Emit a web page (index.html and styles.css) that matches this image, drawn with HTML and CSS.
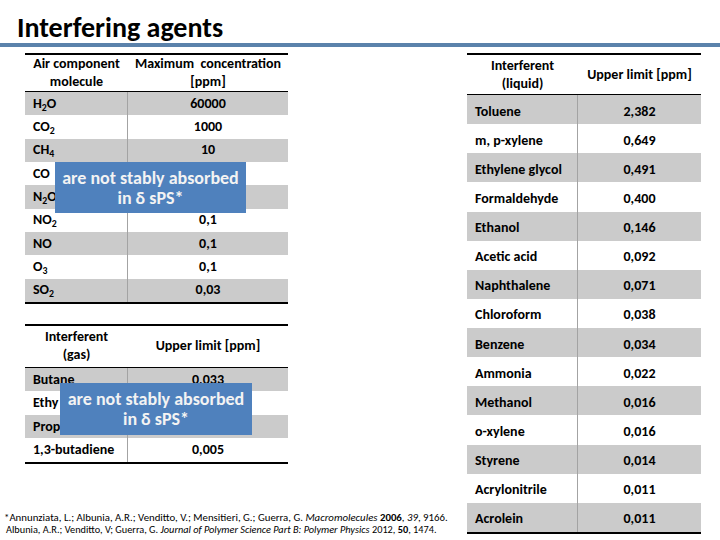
FILE: index.html
```html
<!DOCTYPE html>
<html>
<head>
<meta charset="utf-8">
<link rel="stylesheet" href="styles.css">
</head>
<body>
<header class="title-bar"><h1>Interfering agents</h1></header>
<div class="rule"></div>
<main class="content">
  <section class="left">
    <div class="tbl-wrap t1">
      <table class="data air">
        <colgroup><col class="w1"><col class="w2"></colgroup>
        <thead>
          <tr><th>Air component<br>molecule</th><th>Maximum&nbsp; concentration<br>[ppm]</th></tr>
        </thead>
        <tbody>
          <tr class="g"><td class="c1">H<sub>2</sub>O</td><td class="c2">60000</td></tr>
          <tr><td class="c1">CO<sub>2</sub></td><td class="c2">1000</td></tr>
          <tr class="g"><td class="c1">CH<sub>4</sub></td><td class="c2">10</td></tr>
          <tr><td class="c1">CO</td><td class="c2"></td></tr>
          <tr class="g"><td class="c1">N<sub>2</sub>O</td><td class="c2"></td></tr>
          <tr><td class="c1">NO<sub>2</sub></td><td class="c2">0,1</td></tr>
          <tr class="g"><td class="c1">NO</td><td class="c2">0,1</td></tr>
          <tr><td class="c1">O<sub>3</sub></td><td class="c2">0,1</td></tr>
          <tr class="g"><td class="c1">SO<sub>2</sub></td><td class="c2">0,03</td></tr>
        </tbody>
      </table>
      <div class="overlay o1">are not stably absorbed<br>in δ sPS*</div>
    </div>
    <div class="tbl-wrap t2">
      <table class="data gas">
        <colgroup><col class="w1"><col class="w2"></colgroup>
        <thead>
          <tr><th>Interferent<br>(gas)</th><th>Upper limit [ppm]</th></tr>
        </thead>
        <tbody>
          <tr class="g"><td class="c1">Butane</td><td class="c2">0,033</td></tr>
          <tr><td class="c1">Ethy</td><td class="c2"></td></tr>
          <tr class="g"><td class="c1">Prop</td><td class="c2"></td></tr>
          <tr><td class="c1">1,3-butadiene</td><td class="c2">0,005</td></tr>
        </tbody>
      </table>
      <div class="overlay o2">are not stably absorbed<br>in δ sPS*</div>
    </div>
    <p class="footnote">
      <span class="fl">*Annunziata, L.; Albunia, A.R.; Venditto, V.; Mensitieri, G.; Guerra, G. <i>Macromolecules</i> <b>2006</b>, <i>39</i>, 9166.</span>
      <span class="fl l2">Albunia, A.R.; Venditto, V; Guerra, G. <i>Journal of Polymer Science Part B: Polymer Physics</i> 2012, <b>50</b>, 1474.</span>
    </p>
  </section>
  <section class="right">
    <table class="data liquid">
      <colgroup><col class="w1"><col class="w2"></colgroup>
      <thead>
        <tr><th>Interferent<br>(liquid)</th><th>Upper limit [ppm]</th></tr>
      </thead>
      <tbody>
        <tr class="g"><td class="c1">Toluene</td><td class="c2">2,382</td></tr>
        <tr><td class="c1">m, p-xylene</td><td class="c2">0,649</td></tr>
        <tr class="g"><td class="c1">Ethylene glycol</td><td class="c2">0,491</td></tr>
        <tr><td class="c1">Formaldehyde</td><td class="c2">0,400</td></tr>
        <tr class="g"><td class="c1">Ethanol</td><td class="c2">0,146</td></tr>
        <tr><td class="c1">Acetic acid</td><td class="c2">0,092</td></tr>
        <tr class="g"><td class="c1">Naphthalene</td><td class="c2">0,071</td></tr>
        <tr><td class="c1">Chloroform</td><td class="c2">0,038</td></tr>
        <tr class="g"><td class="c1">Benzene</td><td class="c2">0,034</td></tr>
        <tr><td class="c1">Ammonia</td><td class="c2">0,022</td></tr>
        <tr class="g"><td class="c1">Methanol</td><td class="c2">0,016</td></tr>
        <tr><td class="c1">o-xylene</td><td class="c2">0,016</td></tr>
        <tr class="g"><td class="c1">Styrene</td><td class="c2">0,014</td></tr>
        <tr><td class="c1">Acrylonitrile</td><td class="c2">0,011</td></tr>
        <tr class="g"><td class="c1">Acrolein</td><td class="c2">0,011</td></tr>
      </tbody>
    </table>
  </section>
</main>
</body>
</html>
```
FILE: styles.css
```css
html, body {
  margin: 0;
  padding: 0;
}
body {
  width: 720px;
  height: 540px;
  overflow: hidden;
  background: #ffffff;
  color: #000000;
  font-family: Carlito, Lato, "Open Sans", sans-serif;
}
.title-bar {
  height: 43px;
  box-sizing: border-box;
  padding: 12px 0 0 17px;
}
.title-bar h1 {
  margin: 0;
  font-size: 28px;
  line-height: 31px;
  font-weight: 700;
}
.rule {
  height: 4px;
  background: #5b82ab;
}
.content {
  display: flex;
  padding-top: 6px;
}
.left {
  width: 263px;
  padding-left: 25px;
}
.right {
  width: 234px;
  margin-left: auto;
  margin-right: 19px;
}
.tbl-wrap {
  position: relative;
}
.t2 {
  margin-top: 20px;
}
.data {
  width: 100%;
  table-layout: fixed;
  border-collapse: separate;
  border-spacing: 0;
  border-top: 2px solid #000;
  border-bottom: 2px solid #000;
  font-size: 14px;
  font-weight: 700;
}
.data th {
  padding: 0;
  font-weight: 700;
  line-height: 18px;
  text-align: center;
  vertical-align: middle;
  border-bottom: 1px solid #000;
  box-sizing: border-box;
  white-space: nowrap;
}
.data td {
  padding: 0;
  box-sizing: border-box;
  vertical-align: middle;
  line-height: 16px;
}
.data tr.g td {
  background: #cbcbcb;
}
.data td.c1 {
  padding-left: 8px;
  text-align: left;
  border-right: 1px solid #a3a3a3;
  white-space: nowrap;
}
.data td.c2 {
  text-align: center;
}
.data sub {
  font-size: 0.7em;
  vertical-align: -0.3em;
  line-height: 0;
}
.air .w1, .gas .w1 { width: 103px; }
.liquid .w1 { width: 111px; }
.air th { height: 37px; }
.air td { height: 23.33px; }
.gas th { height: 42px; }
.gas td { height: 23.5px; }
.liquid th { height: 40px; }
.liquid td { height: 29.13px; padding-top: 4px; }
.overlay {
  position: absolute;
  display: flex;
  align-items: center;
  justify-content: center;
  box-sizing: border-box;
  background: #4f81bd;
  color: #f3f3f3;
  font-size: 18px;
  font-weight: 700;
  line-height: 20px;
  text-align: center;
  white-space: nowrap;
}
.o1 {
  left: 30px;
  top: 109px;
  width: 191px;
  height: 51px;
}
.o2 {
  left: 35px;
  top: 59px;
  width: 192px;
  height: 52px;
}
.footnote {
  margin: 48px 0 0 -21px;
  width: 470px;
  font-size: 10.8px;
  line-height: 12px;
  white-space: nowrap;
}
.footnote .fl {
  display: block;
}
.footnote .l2 {
  padding-left: 2px;
  font-size: 10.3px;
}
```
